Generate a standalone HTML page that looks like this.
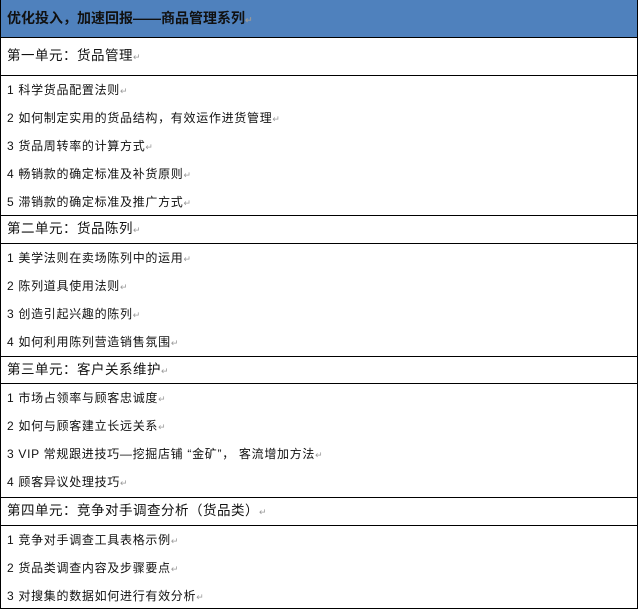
<html><head><style>
body{margin:0;width:639px;height:610px;background:#fff;font-family:"Liberation Sans","Noto Sans CJK SC","WenQuanYi Zen Hei",sans-serif;color:#111;position:relative;overflow:hidden}
.b{position:absolute;left:0;width:636px;border-left:1px solid #000;border-right:1.5px solid #000}
.h{top:0;height:37px;background:#4f81bd;border-bottom:1px solid #000}
.l{position:absolute;left:0;width:638px;height:1px;background:#000}
.t{position:absolute;left:7px;white-space:nowrap;font-size:12px;line-height:16px;letter-spacing:0.7px}
.u{font-size:13.5px;letter-spacing:0.5px}
.r{color:#999;font-size:9px}
</style></head><body>
<div class="b h"></div>
<div class="b" style="top:37px;height:571px;border-bottom:1px solid #000"></div>
<div class="l" style="top:75px"></div>
<div class="l" style="top:215px"></div>
<div class="l" style="top:243px"></div>
<div class="l" style="top:356px"></div>
<div class="l" style="top:383px"></div>
<div class="l" style="top:497px"></div>
<div class="l" style="top:525px"></div>
<div class="t" style="top:10px;font-weight:bold;font-size:14px;color:#111;letter-spacing:0">优化投入，加速回报——商品管理系列<span class="r">↵</span></div>
<div class="t u" style="top:48px">第一单元：货品管理<span class="r">↵</span></div>
<div class="t" style="top:82px">1 科学货品配置法则<span class="r">↵</span></div>
<div class="t" style="top:110px">2 如何制定实用的货品结构，有效运作进货管理<span class="r">↵</span></div>
<div class="t" style="top:138px">3 货品周转率的计算方式<span class="r">↵</span></div>
<div class="t" style="top:166px">4 畅销款的确定标准及补货原则<span class="r">↵</span></div>
<div class="t" style="top:194px">5 滞销款的确定标准及推广方式<span class="r">↵</span></div>
<div class="t u" style="top:221px">第二单元：货品陈列<span class="r">↵</span></div>
<div class="t" style="top:250px">1 美学法则在卖场陈列中的运用<span class="r">↵</span></div>
<div class="t" style="top:278px">2 陈列道具使用法则<span class="r">↵</span></div>
<div class="t" style="top:306px">3 创造引起兴趣的陈列<span class="r">↵</span></div>
<div class="t" style="top:334px">4 如何利用陈列营造销售氛围<span class="r">↵</span></div>
<div class="t u" style="top:362px">第三单元：客户关系维护<span class="r">↵</span></div>
<div class="t" style="top:390px">1 市场占领率与顾客忠诚度<span class="r">↵</span></div>
<div class="t" style="top:418px">2 如何与顾客建立长远关系<span class="r">↵</span></div>
<div class="t" style="top:446px">3 VIP 常规跟进技巧—挖掘店铺 “金矿”， 客流增加方法<span class="r">↵</span></div>
<div class="t" style="top:474px">4 顾客异议处理技巧<span class="r">↵</span></div>
<div class="t u" style="top:503px">第四单元：竞争对手调查分析（货品类）<span class="r">↵</span></div>
<div class="t" style="top:532px">1 竞争对手调查工具表格示例<span class="r">↵</span></div>
<div class="t" style="top:560px">2 货品类调查内容及步骤要点<span class="r">↵</span></div>
<div class="t" style="top:588px">3 对搜集的数据如何进行有效分析<span class="r">↵</span></div>
</body></html>
